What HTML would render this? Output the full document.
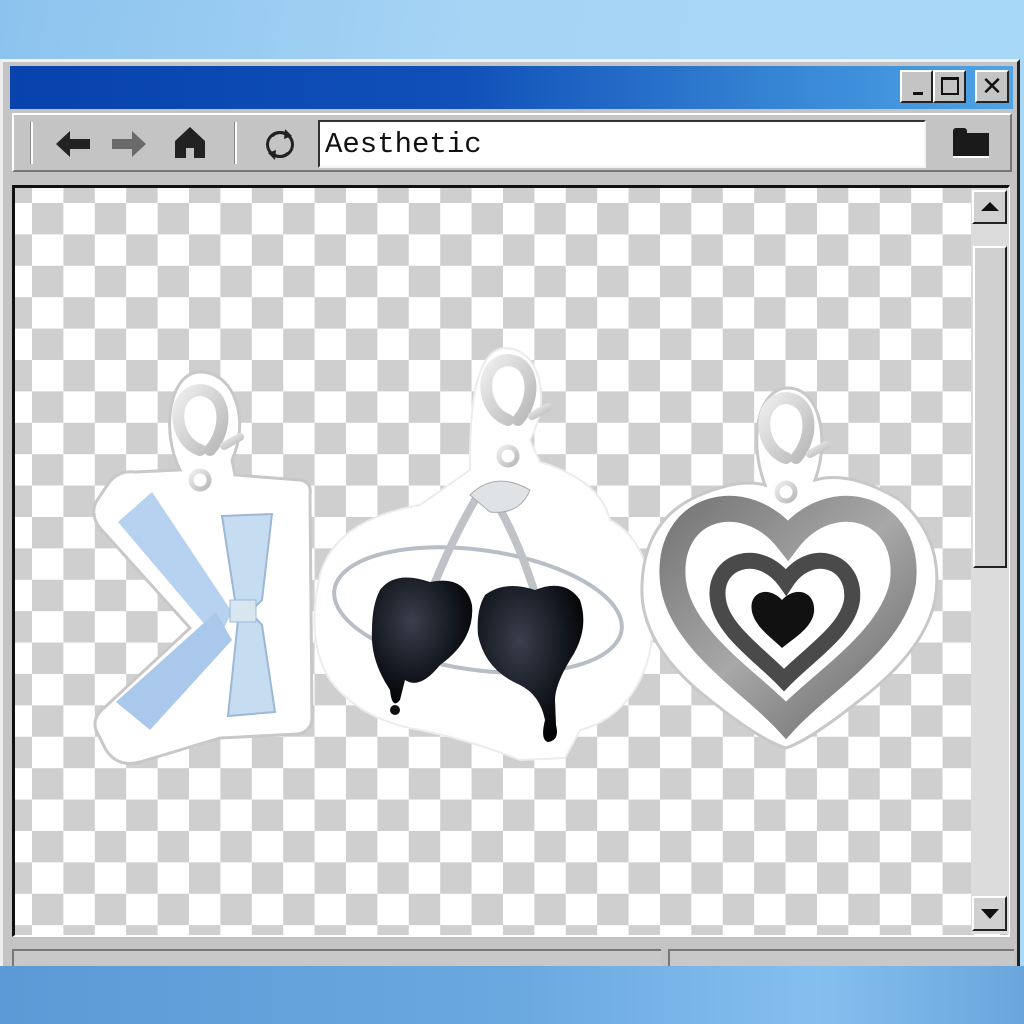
<!DOCTYPE html>
<html><head><meta charset="utf-8"><style>
*{margin:0;padding:0;box-sizing:border-box}
body{width:1024px;height:1024px;overflow:hidden;position:relative;font-family:"Liberation Sans",sans-serif;
background:linear-gradient(100deg,#8cc3ee 0%,#a6d4f5 40%,#a9d9f8 100%)}
.a{position:absolute}
.bev{border-top:2px solid #fff;border-left:2px solid #fff;border-right:2px solid #222;border-bottom:2px solid #222;background:#c4c4c4}
.ins{border-top:2px solid #333;border-left:2px solid #333;border-right:2px solid #f4f4f4;border-bottom:2px solid #f4f4f4}
</style></head><body>
<div class="a" style="left:0;top:59px;width:1020px;height:907px;background:#c4c4c4;border-top:3px solid #f2f2f2;border-left:3px solid #eee;border-right:3px solid #222"></div>
<div class="a" style="left:10px;top:66px;width:1003px;height:43px;background:linear-gradient(90deg,#0842ad 0%,#1050b8 45%,#3a8ad8 80%,#4ea4e6 100%)"></div>
<div class="a bev" style="left:900px;top:70px;width:33px;height:33px"><div class="a" style="left:11px;top:20px;width:10px;height:3px;background:#111"></div></div>
<div class="a bev" style="left:933px;top:70px;width:33px;height:33px"><div class="a" style="left:6px;top:5px;width:18px;height:18px;border:2px solid #111;border-top-width:3px"></div></div>
<div class="a bev" style="left:975px;top:70px;width:34px;height:33px;font-size:26px;line-height:28px;text-align:center;color:#111">✕</div>
<div class="a" style="left:12px;top:113px;width:1000px;height:59px;background:#c4c4c4;border:2px solid #fff;border-right-color:#777;border-bottom-color:#777"></div>
<div class="a" style="left:30px;top:122px;width:3px;height:42px;background:#888;border-right:2px solid #fff"></div>
<div class="a" style="left:234px;top:122px;width:3px;height:42px;background:#888;border-right:2px solid #fff"></div>
<svg class="a" style="left:0;top:0" width="320" height="180">
<path d="M56 144 L70 131 L70 139 L90 139 L90 149 L70 149 L70 157 Z" fill="#222"/>
<path d="M146 144 L132 131 L132 139 L112 139 L112 149 L132 149 L132 157 Z" fill="#6a6a6a"/>
<path d="M190 127 L175 141 L175 158 L186 158 L186 148 L194 148 L194 158 L205 158 L205 141 Z" fill="#222"/>
<path d="M288 136 A12 12 0 1 0 288 153" fill="none" stroke="#222" stroke-width="3"/>
<path d="M272 153 A12 12 0 1 0 272 136" fill="none" stroke="#222" stroke-width="3"/>
<path d="M285 129 L292 136 L284 139Z M275 160 L268 153 L276 150Z" fill="#222"/>
</svg>
<div class="a ins" style="left:318px;top:120px;width:608px;height:48px;background:#fff;font-family:'Liberation Mono',monospace;font-size:29px;line-height:46px;padding-left:5px;color:#111">Aesthetic</div>
<div class="a" style="left:930px;top:117px;width:80px;height:52px;background:#c4c4c4"></div>
<div class="a" style="left:953px;top:133px;width:36px;height:25px;background:#1a1a1a;border-bottom:2px solid #fff"></div>
<div class="a" style="left:953px;top:128px;width:14px;height:6px;background:#1a1a1a;border-radius:3px 3px 0 0"></div>
<div class="a" style="left:12px;top:185px;width:998px;height:752px;border-top:3px solid #111;border-left:3px solid #111;border-right:2px solid #fff;border-bottom:2px solid #fff;overflow:hidden">
<div class="a" style="left:-15px;top:-188px;width:1000px;height:1000px;background-color:#fff;background-image:conic-gradient(#cfcfcf 0 25%,transparent 0 50%,#cfcfcf 0 75%,transparent 0);background-size:62.8px 62.8px;background-position:32px 171.6px"></div>
</div>
<div class="a" style="left:971px;top:188px;width:38px;height:746px;background:#dcdcdc"></div>
<div class="a bev" style="left:972px;top:190px;width:35px;height:34px;background:#d0d0d0"><div class="a" style="left:7px;top:10px;border-left:9px solid transparent;border-right:9px solid transparent;border-bottom:9px solid #111"></div></div>
<div class="a bev" style="left:973px;top:246px;width:34px;height:322px;background:#d0d0d0"></div>
<div class="a bev" style="left:972px;top:896px;width:35px;height:35px;background:#d0d0d0"><div class="a" style="left:7px;top:11px;border-left:9px solid transparent;border-right:9px solid transparent;border-top:10px solid #111"></div></div>
<div class="a" style="left:12px;top:949px;width:649px;height:20px;border-top:2px solid #777;border-left:2px solid #777;background:#c8c8c8"></div>
<div class="a" style="left:668px;top:949px;width:346px;height:20px;border-top:2px solid #777;border-left:2px solid #777;background:#c8c8c8"></div>
<div class="a" style="left:0;top:966px;width:1024px;height:58px;background:linear-gradient(90deg,#5b9ad6,#6aa8e0 50%,#85bff0 80%,#6aa6dc)"></div>
<svg class="a" style="left:0;top:0" width="1024" height="1024">
<defs><linearGradient id="cl" x1="0" y1="0" x2="1" y2="1"><stop offset="0" stop-color="#eee"/><stop offset="1" stop-color="#b8b8b8"/></linearGradient>
<radialGradient id="ch" cx="0.4" cy="0.35" r="0.7"><stop offset="0" stop-color="#3a3f4c"/><stop offset="0.6" stop-color="#141820"/><stop offset="1" stop-color="#000"/></radialGradient>
<linearGradient id="hg" x1="0" y1="0" x2="1" y2="1"><stop offset="0" stop-color="#777"/><stop offset="0.5" stop-color="#a8a8a8"/><stop offset="1" stop-color="#6a6a6a"/></linearGradient></defs>
<path d="M200 372 C235 372 250 420 232 460 L235 475 L300 480 Q312 482 310 495 L312 720 Q310 732 298 734 L220 738 L140 762 Q118 768 106 750 L96 730 Q92 718 104 708 L190 628 L100 528 Q90 515 96 502 L108 484 Q118 470 135 472 L180 470 C160 430 170 372 200 372Z" fill="#fff" stroke="#c8c8c8" stroke-width="3"/>
<path d="M505 348 C540 348 552 400 530 440 L540 462 Q600 480 610 520 Q640 535 650 580 Q660 640 640 680 Q620 720 580 730 L565 758 L520 760 Q470 740 420 730 Q360 720 330 680 Q305 640 320 575 Q335 520 420 505 L470 470 C470 430 470 350 505 348Z" fill="#fff" stroke="#ececec" stroke-width="2"/>
<path d="M788 388 C820 388 830 440 815 480 Q850 470 900 500 Q945 540 935 600 Q925 650 860 700 Q810 740 786 748 Q760 740 710 700 Q645 650 642 595 Q640 520 700 495 Q740 478 765 485 C748 440 758 388 788 388Z" fill="#fff" stroke="#c8c8c8" stroke-width="3"/>
<g fill="none" stroke="url(#cl)" stroke-linecap="round">
<path d="M200 450 C172 440 170 392 200 390 C228 392 228 430 210 450" stroke-width="12"/>
<path d="M224 446 L240 437" stroke-width="8"/>
<circle cx="200" cy="480" r="9" stroke-width="5"/>
<path d="M508 420 C480 410 478 362 508 360 C536 362 536 400 518 420" stroke-width="12"/>
<path d="M532 416 L548 407" stroke-width="8"/>
<circle cx="508" cy="456" r="9" stroke-width="5"/>
<path d="M786 458 C758 448 756 400 786 398 C814 400 814 438 796 458" stroke-width="12"/>
<path d="M810 454 L826 445" stroke-width="8"/>
<circle cx="786" cy="492" r="9" stroke-width="5"/>
</g>
<path d="M118 522 L152 492 L232 612 L218 640 Z" fill="#b6d2f0"/>
<path d="M116 702 L150 730 L232 640 L216 612 Z" fill="#a9c8ec"/>
<path d="M222 516 L272 514 L262 600 L250 612 L262 625 L275 712 L228 716 L238 620 Z" fill="#c6dcf0" stroke="#9cb8d6" stroke-width="2"/>
<rect x="230" y="600" width="26" height="22" fill="#d8e6f2" stroke="#9cb8d6"/>
<ellipse cx="478" cy="610" rx="145" ry="60" transform="rotate(8 478 610)" fill="none" stroke="#b8bec5" stroke-width="4"/>
<path d="M420 620 Q450 540 480 492 M540 610 Q520 540 490 492" fill="none" stroke="#bfc3c7" stroke-width="8"/>
<path d="M470 495 Q495 470 530 490 Q520 515 490 512 Z" fill="#dfe3e6" stroke="#aaa"/>
<path d="M380 590 Q395 570 430 582 Q465 575 472 605 Q475 640 440 665 Q420 690 405 680 L400 700 Q392 710 390 690 Q370 660 372 630 Q372 605 380 590Z" fill="url(#ch)"/>
<path d="M485 595 Q505 580 535 590 Q565 578 580 600 Q590 630 570 660 Q555 685 555 700 L556 725 Q560 740 548 742 Q540 740 545 720 Q540 695 520 685 Q485 670 478 635 Q476 610 485 595Z" fill="url(#ch)"/>
<circle cx="395" cy="710" r="5" fill="#111"/>
<g fill="none">
<path d="M788 540 C745 485 665 505 673 582 C680 640 752 683 786 720 C820 683 893 640 903 582 C911 505 830 485 788 540Z" stroke="url(#hg)" stroke-width="26"/>
<path d="M786 582 C760 545 712 560 718 600 C722 630 760 655 784 680 C808 655 848 630 852 600 C856 560 810 545 786 582Z" stroke="#4a4a4a" stroke-width="16"/>
</g>
<path d="M782 600 C768 585 748 592 752 612 C756 628 772 638 782 648 C794 638 812 628 814 612 C816 592 796 585 782 600Z" fill="#111"/>
</svg>
</body></html>
